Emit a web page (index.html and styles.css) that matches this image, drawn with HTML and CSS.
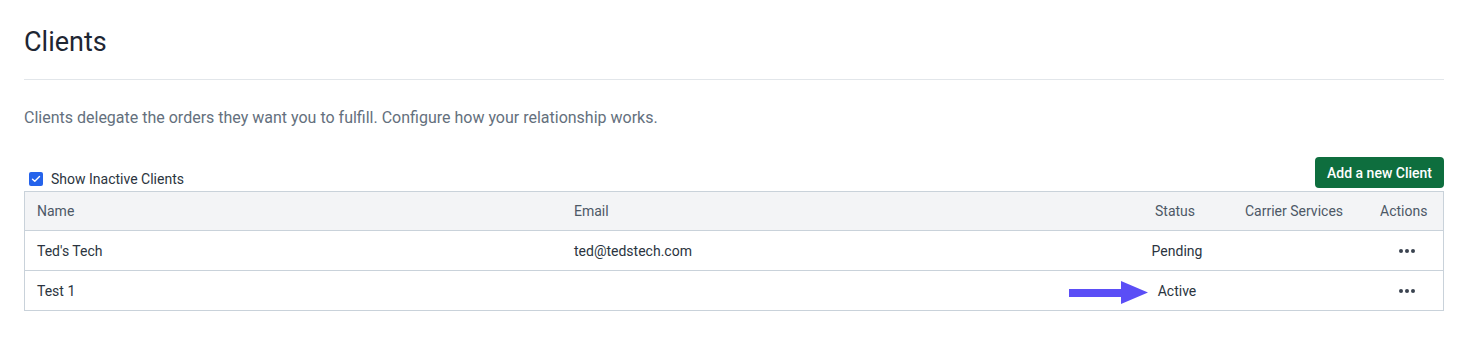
FILE: index.html
```html
<!DOCTYPE html>
<html>
<head>
<meta charset="utf-8">
<link rel="stylesheet" href="styles.css">
</head>
<body>
<div class="page">
  <h1 class="title">Clients</h1>
  <hr class="divider">
  <p class="desc">Clients delegate the orders they want you to fulfill. Configure how your relationship works.</p>
  <div class="toolbar">
    <label class="check">
      <span class="box"><svg width="10" height="8" viewBox="0 0 10 8"><path d="M1.5 4.2 L3.8 6.3 L8.5 1.6" fill="none" stroke="#fff" stroke-width="1.4" stroke-linecap="round" stroke-linejoin="round"/></svg></span>
      <span>Show Inactive Clients</span>
    </label>
    <button class="btn">Add a new Client</button>
  </div>
  <div class="table">
    <div class="row head">
      <div class="cell">Name</div>
      <div class="cell">Email</div>
      <div class="cell center">Status</div>
      <div class="cell">Carrier Services</div>
      <div class="cell">Actions</div>
    </div>
    <div class="row body">
      <div class="cell">Ted's Tech</div>
      <div class="cell">ted@tedstech.com</div>
      <div class="cell center body-status">Pending</div>
      <div class="cell"></div>
      <div class="cell dots-cell"><span class="dots"><i></i><i></i><i></i></span></div>
    </div>
    <div class="row last">
      <div class="cell">Test 1</div>
      <div class="cell"></div>
      <div class="cell center body-status">Active
        <svg class="arrow" width="80" height="26" viewBox="0 0 80 26"><path d="M0 9 H52 V1 L79 12.5 L52 24 V17 H0 Z" fill="#5b4ef6"/></svg>
      </div>
      <div class="cell"></div>
      <div class="cell dots-cell"><span class="dots"><i></i><i></i><i></i></span></div>
    </div>
  </div>
</div>
</body>
</html>
```
FILE: styles.css
```css
* { box-sizing: border-box; }
html, body { margin: 0; padding: 0; background: #fff; }
body { font-family: Roboto, "Noto Sans", Arial, sans-serif; color: #1f2937; }
.page { padding: 24px 17px 0 24px; }
.title { margin: 0; font-size: 27px; font-weight: 400; line-height: 36px; color: #1e2633; }
.divider { border: 0; border-top: 1px solid #e2e6ea; margin: 19px 0 0 0; }
.desc { margin: 26px 0 0 0; font-size: 16px; line-height: 24px; color: #64707d; }
.toolbar { display: flex; justify-content: space-between; align-items: flex-end; margin-top: 26px; height: 32px; }
.check { display: flex; align-items: center; gap: 8px; font-size: 14px; color: #2b3440; padding-left: 5px; margin-bottom: 1px; }
.box { width: 14px; height: 14px; background: #2563eb; border-radius: 2px; display: flex; align-items: center; justify-content: center; }
.btn { font-family: inherit; background: #0e6e3e; color: #fff; border: 0; border-radius: 4px; height: 31px; padding: 0 12px; font-size: 14px; font-weight: 500; }
.table { margin-top: 3px; border: 1px solid #c9d2da; }
.row { display: grid; grid-template-columns: 536px 557px 114px 135px 1fr; height: 39px; align-items: center; border-bottom: 1px solid #c9d2da; font-size: 14px; color: #2b3440; }
.row.body { height: 40px; }
.row.last { border-bottom: 0; height: 39px; }
.row.head { background: #f3f4f6; color: #4d5866; }
.cell { padding: 0 13px; position: relative; }
.cell:first-child { padding-left: 12px; }
.center { text-align: center; }
.body-status { padding-left: 16px; padding-right: 12px; }
.dots-cell { display: flex; justify-content: center; padding-left: 17px; padding-right: 13px; }
.dots { display: flex; gap: 2px; }
.dots i { width: 4px; height: 4px; border-radius: 50%; background: #3a4350; display: block; }
.arrow { position: absolute; left: -49px; top: -3px; }
```
